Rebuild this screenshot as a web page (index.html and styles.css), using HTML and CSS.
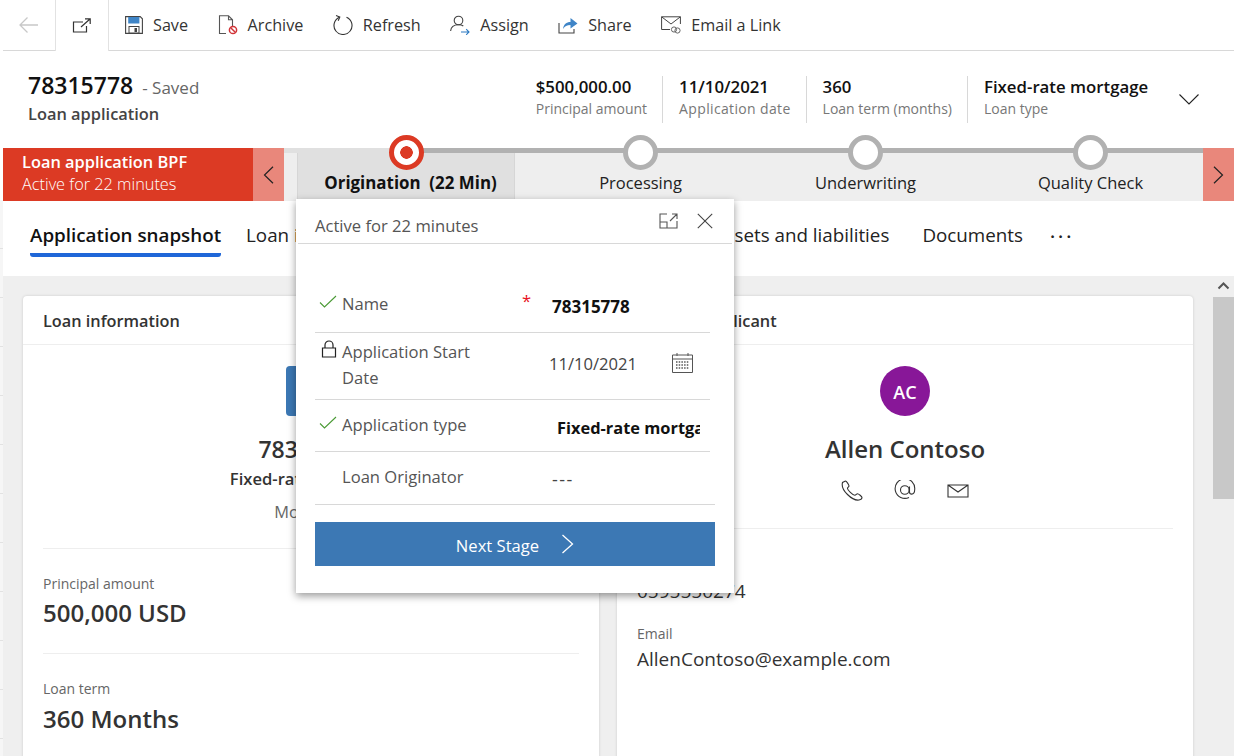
FILE: index.html
```html
<!DOCTYPE html>
<html lang="en">
<head>
    <meta charset="UTF-8">
    <title>Loan application - 78315778</title>
    <link rel="stylesheet" href="styles.css">
</head>
<body>
<div class="page">
    <div class="toolbar">
        <div class="nav-cell">
            <svg width="22" height="18" viewBox="0 0 22 18" fill="none" stroke="#c8c8c8" stroke-width="1.3"><path d="M20 9H2M9.5 1.500L2 9l7.500 7.500"/></svg>
        </div>
        <div class="nav-cell nav-cell-open">
            <svg width="20" height="16" viewBox="0 0 20 16" fill="none" stroke="#333" stroke-width="1.2"><path d="M11 4H1.500v10h13V8"/><path d="M9 9l9-8M13 .8h5.200V6"/></svg>
        </div>
        <div class="cmd">
            <svg width="18" height="18" viewBox="0 0 18 18"><path d="M.6.6h14.600l2.200 2.200v14.600H.6z" fill="#fff" stroke="#444" stroke-width="1.1"/><rect x="3.200" y="1" width="11.200" height="6.500" fill="#3f85c7"/><rect x="4" y="10.500" width="10" height="6.500" fill="#fff" stroke="#444"/><rect x="9.500" y="12" width="2.500" height="4" fill="#444"/></svg>
            <span>Save</span>
        </div>
        <div class="cmd">
            <svg width="20" height="20" viewBox="0 0 20 20" fill="none"><path d="M8 18.500H1.500V.8h9l4 4v7M10.500.8v4h4" stroke="#555" stroke-width="1.1"/><circle cx="15" cy="15" r="3.600" stroke="#d13438" stroke-width="1.5"/><path d="M12.500 12.500l5 5" stroke="#d13438" stroke-width="1.5"/></svg>
            <span>Archive</span>
        </div>
        <div class="cmd">
            <svg width="20" height="20" viewBox="0 0 20 20" fill="none" stroke="#333" stroke-width="1.1"><path d="M6.500 2.200A9 9 0 1 0 13.500 2.200"/><path d="M3 .6l3.800 1.500-1.600 3.600"/></svg>
            <span>Refresh</span>
        </div>
        <div class="cmd">
            <svg width="20" height="20" viewBox="0 0 20 20" fill="none"><circle cx="8.500" cy="5.500" r="4.300" stroke="#444" stroke-width="1.1"/><path d="M.6 16c.3-4 3.300-6.300 8-6.300 2 0 3.500.4 4.700 1.300" stroke="#444" stroke-width="1.1"/><path d="M11 17h8M16.200 14.200L19 17l-2.800 2.800" stroke="#2b79c2" stroke-width="1.1"/></svg>
            <span>Assign</span>
        </div>
        <div class="cmd">
            <svg width="20" height="18" viewBox="0 0 20 18" fill="none"><path d="M1 7v10h15v-4" stroke="#444" stroke-width="1.1"/><path d="M5 13c.5-4.500 3.500-7 7.500-7V2L19.500 7.500 12.500 12.500V9C9 9 6.500 10.500 5 13z" fill="#3f85c7"/></svg>
            <span>Share</span>
        </div>
        <div class="cmd">
            <svg width="20" height="18" viewBox="0 0 20 18" fill="none" stroke="#444" stroke-width="1"><path d="M9 13.500H.6V.8h18.800V8"/><path d="M.6.800L10 8l9.400-7.200"/><circle cx="13" cy="13.500" r="2.600" stroke="#666"/><circle cx="16.500" cy="14.500" r="2.600" stroke="#666"/></svg>
            <span>Email a Link</span>
        </div>
    </div>

    <div class="header">
        <div class="record">
            <div class="record-title">78315778 <span class="saved">- Saved</span></div>
            <div class="record-type">Loan application</div>
        </div>
        <div class="summary">
            <div class="summary-item"><b>$500,000.00</b><span>Principal amount</span></div>
            <div class="summary-item summary-date"><b>11/10/2021</b><span>Application date</span></div>
            <div class="summary-item"><b>360</b><span>Loan term (months)</span></div>
            <div class="summary-item summary-last"><b>Fixed-rate mortgage</b><span>Loan type</span></div>
            <svg class="summary-toggle" width="20" height="11" viewBox="0 0 20 11" fill="none" stroke="#222" stroke-width="1.1"><path d="M.5.500L10 10 19.500.500"/></svg>
        </div>
    </div>

    <div class="process">
        <div class="process-flag">
            <div class="flag-text"><b>Loan application BPF</b><span>Active for 22 minutes</span></div>
            <div class="flag-arrow">
                <svg width="11" height="18" viewBox="0 0 11 18" fill="none" stroke="#222" stroke-width="1.2"><path d="M10 .8L1.500 9l8.500 8.200"/></svg>
            </div>
        </div>
        <div class="stages">
            <div class="stage stage-active"><i class="dot dot-active"></i><b>Origination&nbsp; (22 Min)</b></div>
            <div class="stage"><i class="dot"></i><span>Processing</span></div>
            <div class="stage"><i class="dot"></i><span>Underwriting</span></div>
            <div class="stage"><i class="dot"></i><span>Quality Check</span></div>
        </div>
        <div class="flag-arrow">
            <svg width="11" height="18" viewBox="0 0 11 18" fill="none" stroke="#222" stroke-width="1.2"><path d="M1 .8L9.500 9 1 17.200"/></svg>
        </div>
    </div>

    <div class="tabs">
        <span class="tab tab-active">Application snapshot</span>
        <span class="tab">Loan information</span>
        <span class="tab tab-income">Income</span>
        <span class="tab">Assets and liabilities</span>
        <span class="tab tab-docs">Documents</span>
        <span class="tab tab-more">&middot;&middot;&middot;</span>
    </div>

    <div class="content">
        <div class="columns">
            <div class="card">
                <div class="card-title">Loan information</div>
                <div class="hero hero-loan">
                    <div class="hero-icon"></div>
                    <div class="hero-name hero-number">78315778</div>
                    <div class="hero-sub">Fixed-rate mortgage</div>
                    <div class="hero-note">Mortgage</div>
                </div>
                <div class="field">
                    <label>Principal amount</label>
                    <div class="field-big">500,000 USD</div>
                </div>
                <div class="field">
                    <label>Loan term</label>
                    <div class="field-big">360 Months</div>
                </div>
            </div>
            <div class="card">
                <div class="card-title">Primary applicant</div>
                <div class="hero">
                    <div class="avatar">AC</div>
                    <div class="hero-name">Allen Contoso</div>
                    <div class="contact-icons">
                        <svg width="22" height="21" viewBox="0 0 22 21" fill="none" stroke="#333" stroke-width="1.1"><path d="M4.500 1L1.500 2.500C.5 6 3 11 6.500 14.500S15 20.500 18 20c1.500-.3 3-1.500 3-2.500 0-1-3.500-3.800-4.500-3.800s-1.500 1.500-2.700 1.500C11.500 15.200 6.700 10 6.500 8.500 6.300 7.500 8 7 8 6 8 5 5.500 1 4.500 1z"/></svg>
                        <svg width="22" height="21" viewBox="0 0 22 21" fill="none" stroke="#333" stroke-width="1.1"><path d="M15 17.500A9.800 9.800 0 1 1 20.700 9.500c0 3-1.200 4.600-3 4.600-1.300 0-2.200-.8-2.200-2.200V6.500"/><circle cx="10.800" cy="10" r="4.300"/></svg>
                        <svg width="22" height="14" viewBox="0 0 22 14" fill="none" stroke="#333" stroke-width="1.100"><path d="M1 1h20v12H1zM1 1l10 7 10-7"/></svg>
                    </div>
                </div>
                <div class="field field-contact">
                    <label>Phone</label>
                    <div class="field-text">0595550274</div>
                </div>
                <div>
                    <label class="plain-label">Email</label>
                    <div class="field-text">AllenContoso@example.com</div>
                </div>
            </div>
        </div>
        <div class="scrollbar">
            <div class="scroll-up">
                <svg width="13" height="8" viewBox="0 0 13 8" fill="none" stroke="#555" stroke-width="2"><path d="M1.500 6.500l5-5 5 5"/></svg>
            </div>
            <div class="scroll-thumb"></div>
        </div>
    </div>

    <div class="flyout">
        <div class="flyout-head">
            <span>Active for 22 minutes</span>
            <svg class="flyout-icon" width="19" height="16" viewBox="0 0 19 16" fill="none" stroke="#555" stroke-width="1.1"><path d="M8 1H1v14h17V8M1 9h7v6M11 8l7-7M13 1h5v5"/></svg>
            <svg class="flyout-icon" width="16" height="16" viewBox="0 0 16 16" fill="none" stroke="#444" stroke-width="1.1"><path d="M.8.800l14.400 14.400M15.200.800L.8 15.200"/></svg>
        </div>
        <div class="flyout-body">
            <div class="step step-name">
                <svg class="step-icon" width="18" height="13" viewBox="0 0 18 13" fill="none" stroke="#4a9a35" stroke-width="1.100"><path d="M1 7.500L5.500 12 17 1"/></svg>
                <span class="step-label">Name</span>
                <span class="required">*</span>
                <b class="step-value">78315778</b>
            </div>
            <div class="step step-date">
                <svg class="lock-icon" width="15" height="18" viewBox="0 0 15 18" fill="none" stroke="#222" stroke-width="1.200"><path d="M1 8h13v9H1zM3.500 8V5a4 4 0 0 1 8 0v3"/></svg>
                <span class="step-label step-label-wrap">Application Start Date</span>
                <span class="date-value">11/10/2021</span>
                <svg class="calendar" width="21" height="20" viewBox="0 0 21 20" fill="none" stroke="#555"><path d="M.5 2h20v17.500H.5zM.5 6h20"/><path d="M5 0v3M16 0v3"/><path d="M4 9h13M4 12h13M4 15h13" stroke-dasharray="1.500 1.200" stroke-width="1.500"/></svg>
            </div>
            <div class="step step-type">
                <svg class="step-icon" width="18" height="13" viewBox="0 0 18 13" fill="none" stroke="#4a9a35" stroke-width="1.100"><path d="M1 7.500L5.500 12 17 1"/></svg>
                <span class="step-label">Application type</span>
                <b class="step-value step-value-clip">Fixed-rate mortgage</b>
            </div>
            <div class="step step-last">
                <span class="step-label step-label-plain">Loan Originator</span>
                <span class="empty-value">---</span>
            </div>
            <div class="next-stage">
                <span>Next Stage</span>
                <svg width="13" height="20" viewBox="0 0 13 20" fill="none" stroke="#fff" stroke-width="1.300"><path d="M1.500 1l10 9-10 9"/></svg>
            </div>
        </div>
    </div>
</div>
</body>
</html>
```

FILE: styles.css
```css
* {
    box-sizing: border-box;
}
body {
    margin: 0;
    background-color: #ffffff;
    font-family: "Open Sans", "Noto Sans", sans-serif;
    color: #222222;
}
b {
    font-weight: 600;
}
svg {
    display: block;
    flex: none;
}
.page {
    position: relative;
    width: 1234px;
    height: 756px;
    overflow: hidden;
    padding-left: 3px;
    display: flex;
    flex-direction: column;
    background: repeating-linear-gradient(#f6f6f6 0 48px, #e2e2e2 48px 49px) 0 200px / 3px 100% no-repeat;
}

/* command bar */
.toolbar {
    height: 51px;
    flex: none;
    display: flex;
    align-items: stretch;
    background-color: #ffffff;
    border-bottom: 1px solid #d8d8d8;
}
.nav-cell {
    width: 52px;
    display: flex;
    align-items: center;
    justify-content: center;
}
.nav-cell-open {
    width: 54px;
    height: 51px;
    margin-right: 16px;
    background-color: #ffffff;
    border-left: 1px solid #e2e2e2;
    border-right: 1px solid #e2e2e2;
}
.cmd {
    display: flex;
    align-items: center;
    gap: 10px;
    margin-right: 29.5px;
    font-size: 16.2px;
    color: #333333;
}
.cmd span {
    margin-top: -1px;
}

/* record header */
.header {
    height: 97px;
    flex: none;
    display: flex;
    justify-content: space-between;
    padding: 19px 35px 0 25px;
    background-color: #ffffff;
}
.record-title {
    font-size: 23px;
    font-weight: 600;
    line-height: 30px;
    color: #111111;
}
.saved {
    font-size: 17px;
    font-weight: 400;
    color: #666666;
    margin-left: 3px;
}
.record-type {
    font-size: 16.4px;
    font-weight: 600;
    line-height: 24px;
    margin-top: -1px;
    color: #444444;
}
.summary {
    display: flex;
    align-items: flex-start;
    padding-top: 6px;
}
.summary-item {
    display: flex;
    flex-direction: column;
    height: 47px;
    padding: 0 15px 0 16px;
    border-left: 1px solid #d8d8d8;
    font-size: 16.8px;
    line-height: 22px;
    color: #111111;
}
.summary-item:first-child {
    border-left: 0;
}
.summary-item span {
    font-size: 14px;
    line-height: 22px;
    color: #777777;
}
.summary-date span {
    letter-spacing: 0.35px;
}
.summary-last {
    width: 212px;
}
.summary-toggle {
    margin-top: 18px;
}

/* process bar */
.process {
    height: 53px;
    flex: none;
    display: flex;
    background-color: #ffffff;
}
.process-flag {
    width: 281px;
    display: flex;
    background-color: #dc3a24;
}
.flag-text {
    width: 250px;
    padding: 3px 0 0 19px;
    display: flex;
    flex-direction: column;
    font-size: 16.4px;
    line-height: 22px;
    color: #ffffff;
}
.flag-text span {
    font-size: 16.3px;
    font-weight: 300;
}
.flag-arrow {
    width: 31px;
    display: flex;
    align-items: center;
    justify-content: center;
    background-color: #e9877b;
}
.stages {
    flex: 1;
    display: flex;
    padding: 5px 0 0 13px;
    background: linear-gradient(to right, #e0e0e0 122px, #b1b1b1 122px) 0 0 / 100% 5px no-repeat, #eeeeee;
}
.stage {
    width: 225px;
    display: flex;
    flex-direction: column;
    align-items: center;
    font-size: 16.5px;
    line-height: 24px;
    color: #222222;
}
.stage-active {
    width: 218px;
    margin-right: 13px;
    background-color: #e0e0e0;
    border-right: 1px solid #d6d6d6;
    border-bottom: 1px solid #d6d6d6;
    border-left: 1px solid #d6d6d6;
}
.stage b {
    margin-left: 9px;
    font-size: 16.9px;
    font-weight: 700;
    white-space: nowrap;
    color: #111111;
}
.dot {
    display: block;
    width: 35px;
    height: 35px;
    margin-top: -18px;
    margin-bottom: 1px;
    border-radius: 50%;
    border: 5px solid #b1b1b1;
    background-color: #ffffff;
}
.dot-active {
    border-color: #dc3a24;
    background: radial-gradient(circle, #dc3a24 0 6px, #ffffff 6.5px);
}

/* tabs */
.tabs {
    height: 75px;
    flex: none;
    display: flex;
    gap: 25px;
    padding: 21px 0 0 27px;
    background-color: #ffffff;
}
.tab {
    font-size: 18.8px;
    line-height: 26px;
    height: 35px;
    white-space: nowrap;
    color: #222222;
}
.tab-active {
    font-weight: 600;
    color: #111111;
    border-bottom: 4px solid #1f67d8;
    border-radius: 0 0 3px 3px;
}
.tab-income {
    width: 266px;
}
.tab-docs {
    margin-left: 8px;
}
.tab-more {
    margin: 1px 0 0 2px;
    font-weight: 600;
    letter-spacing: 3px;
}

/* cards */
.content {
    flex: 1;
    display: flex;
    background-color: #efefef;
    padding: 20px 0 0 20px;
}
.columns {
    width: 1170px;
    display: flex;
    gap: 18px;
}
.card {
    width: 576px;
    padding: 0 20px;
    background-color: #ffffff;
    border-radius: 4px 4px 0 0;
    box-shadow: 0 0 3px rgba(0, 0, 0, 0.15);
}
.card-title {
    height: 49px;
    margin: 0 -20px;
    padding: 13px 20px 0;
    border-bottom: 1px solid #eeeeee;
    font-size: 16.3px;
    font-weight: 600;
    line-height: 24px;
    color: #333333;
}
.hero {
    height: 183px;
    padding-top: 21px;
    display: flex;
    flex-direction: column;
    align-items: center;
}
.hero-loan {
    height: 203px;
}
.hero-icon {
    width: 50px;
    height: 50px;
    border-radius: 4px;
    background-color: #3c78b4;
}
.avatar {
    width: 50px;
    height: 50px;
    border-radius: 50%;
    background-color: #881798;
    color: #ffffff;
    font-size: 18px;
    font-weight: 600;
    line-height: 52px;
    text-align: center;
}
.hero-name {
    margin-top: 16px;
    font-size: 24px;
    font-weight: 600;
    line-height: 34px;
    color: #333333;
}
.hero-number {
    font-size: 23px;
}
.hero-sub {
    font-size: 16.6px;
    font-weight: 600;
    line-height: 24px;
    margin-top: 1px;
    color: #333333;
}
.hero-note {
    font-size: 16.4px;
    line-height: 24px;
    margin-top: 9px;
    color: #666666;
}
.contact-icons {
    margin-top: 14px;
    display: flex;
    align-items: center;
    gap: 31px;
}
.field {
    border-top: 1px solid #eeeeee;
    height: 105px;
    padding-top: 25px;
}
.field + .field .field-big {
    margin-top: 1px;
}
.field-contact {
    height: 96px;
    padding-top: 27px;
}
.field label,
.plain-label {
    display: block;
    font-size: 14px;
    line-height: 20px;
    color: #666666;
}
.field-big {
    font-size: 24px;
    font-weight: 600;
    line-height: 38px;
    color: #333333;
}
.field-text {
    font-size: 19px;
    line-height: 31px;
    color: #333333;
}
.scrollbar {
    width: 21px;
    margin-left: 20px;
    display: flex;
    flex-direction: column;
    align-items: center;
}
.scroll-up {
    height: 1px;
    margin-top: -14px;
}
.scroll-thumb {
    width: 21px;
    height: 202px;
    margin-top: 14px;
    background-color: #c8c8c8;
}

/* stage flyout */
.flyout {
    position: absolute;
    left: 296px;
    top: 199px;
    width: 438px;
    height: 394px;
    background-color: #ffffff;
    box-shadow: 0 3px 8px rgba(0, 0, 0, 0.4);
    z-index: 5;
}
.flyout-head {
    height: 45px;
    margin: 0 2px;
    padding: 15px 19px 0 17px;
    display: flex;
    gap: 19px;
    border-bottom: 1px solid #d8d8d8;
    font-size: 16.6px;
    line-height: 24px;
    color: #555555;
}
.flyout-head span {
    flex: 1;
}
.flyout-icon {
    margin-top: -1px;
}
.flyout-body {
    padding: 0 19px;
    font-size: 16.6px;
    line-height: 26px;
    color: #555555;
}
.step {
    display: flex;
    width: 395px;
    border-bottom: 1px solid #d8d8d8;
    padding-left: 4px;
}
.step-name {
    height: 89px;
    padding-top: 47px;
}
.step-date {
    height: 67px;
    padding-top: 6px;
}
.step-type {
    height: 52px;
    padding-top: 12px;
}
.step-last {
    width: 400px;
    height: 53px;
    padding-top: 12px;
}
.step-icon {
    margin: 4px 5px 0 0;
}
.lock-icon {
    margin: 1px 5px 0 2px;
    width: 16px;
}
.step-label {
    width: 180px;
}
.step-label-wrap {
    width: 162px;
}
.step-label-plain {
    margin-left: 23px;
}
.required {
    color: #e81123;
    margin-top: -3px;
    width: 30px;
}
.step-value {
    font-size: 17px;
    font-weight: 700;
    color: #111111;
    margin-top: 3px;
}
.step-value-clip {
    width: 143px;
    margin-left: 35px;
    font-size: 16.4px;
    white-space: nowrap;
    overflow: hidden;
}
.date-value {
    margin: 12px 35px 0 45px;
    color: #444444;
}
.calendar {
    margin-top: 14px;
}
.empty-value {
    margin: 2px 0 0 30px;
    font-size: 18px;
    letter-spacing: 1.5px;
    color: #444444;
}
.next-stage {
    width: 400px;
    height: 44px;
    margin-top: 17px;
    display: flex;
    align-items: center;
    justify-content: center;
    gap: 22px;
    background-color: #3c78b4;
    color: #ffffff;
    font-size: 16.6px;
}
.next-stage span {
    padding-top: 3px;
}
```
